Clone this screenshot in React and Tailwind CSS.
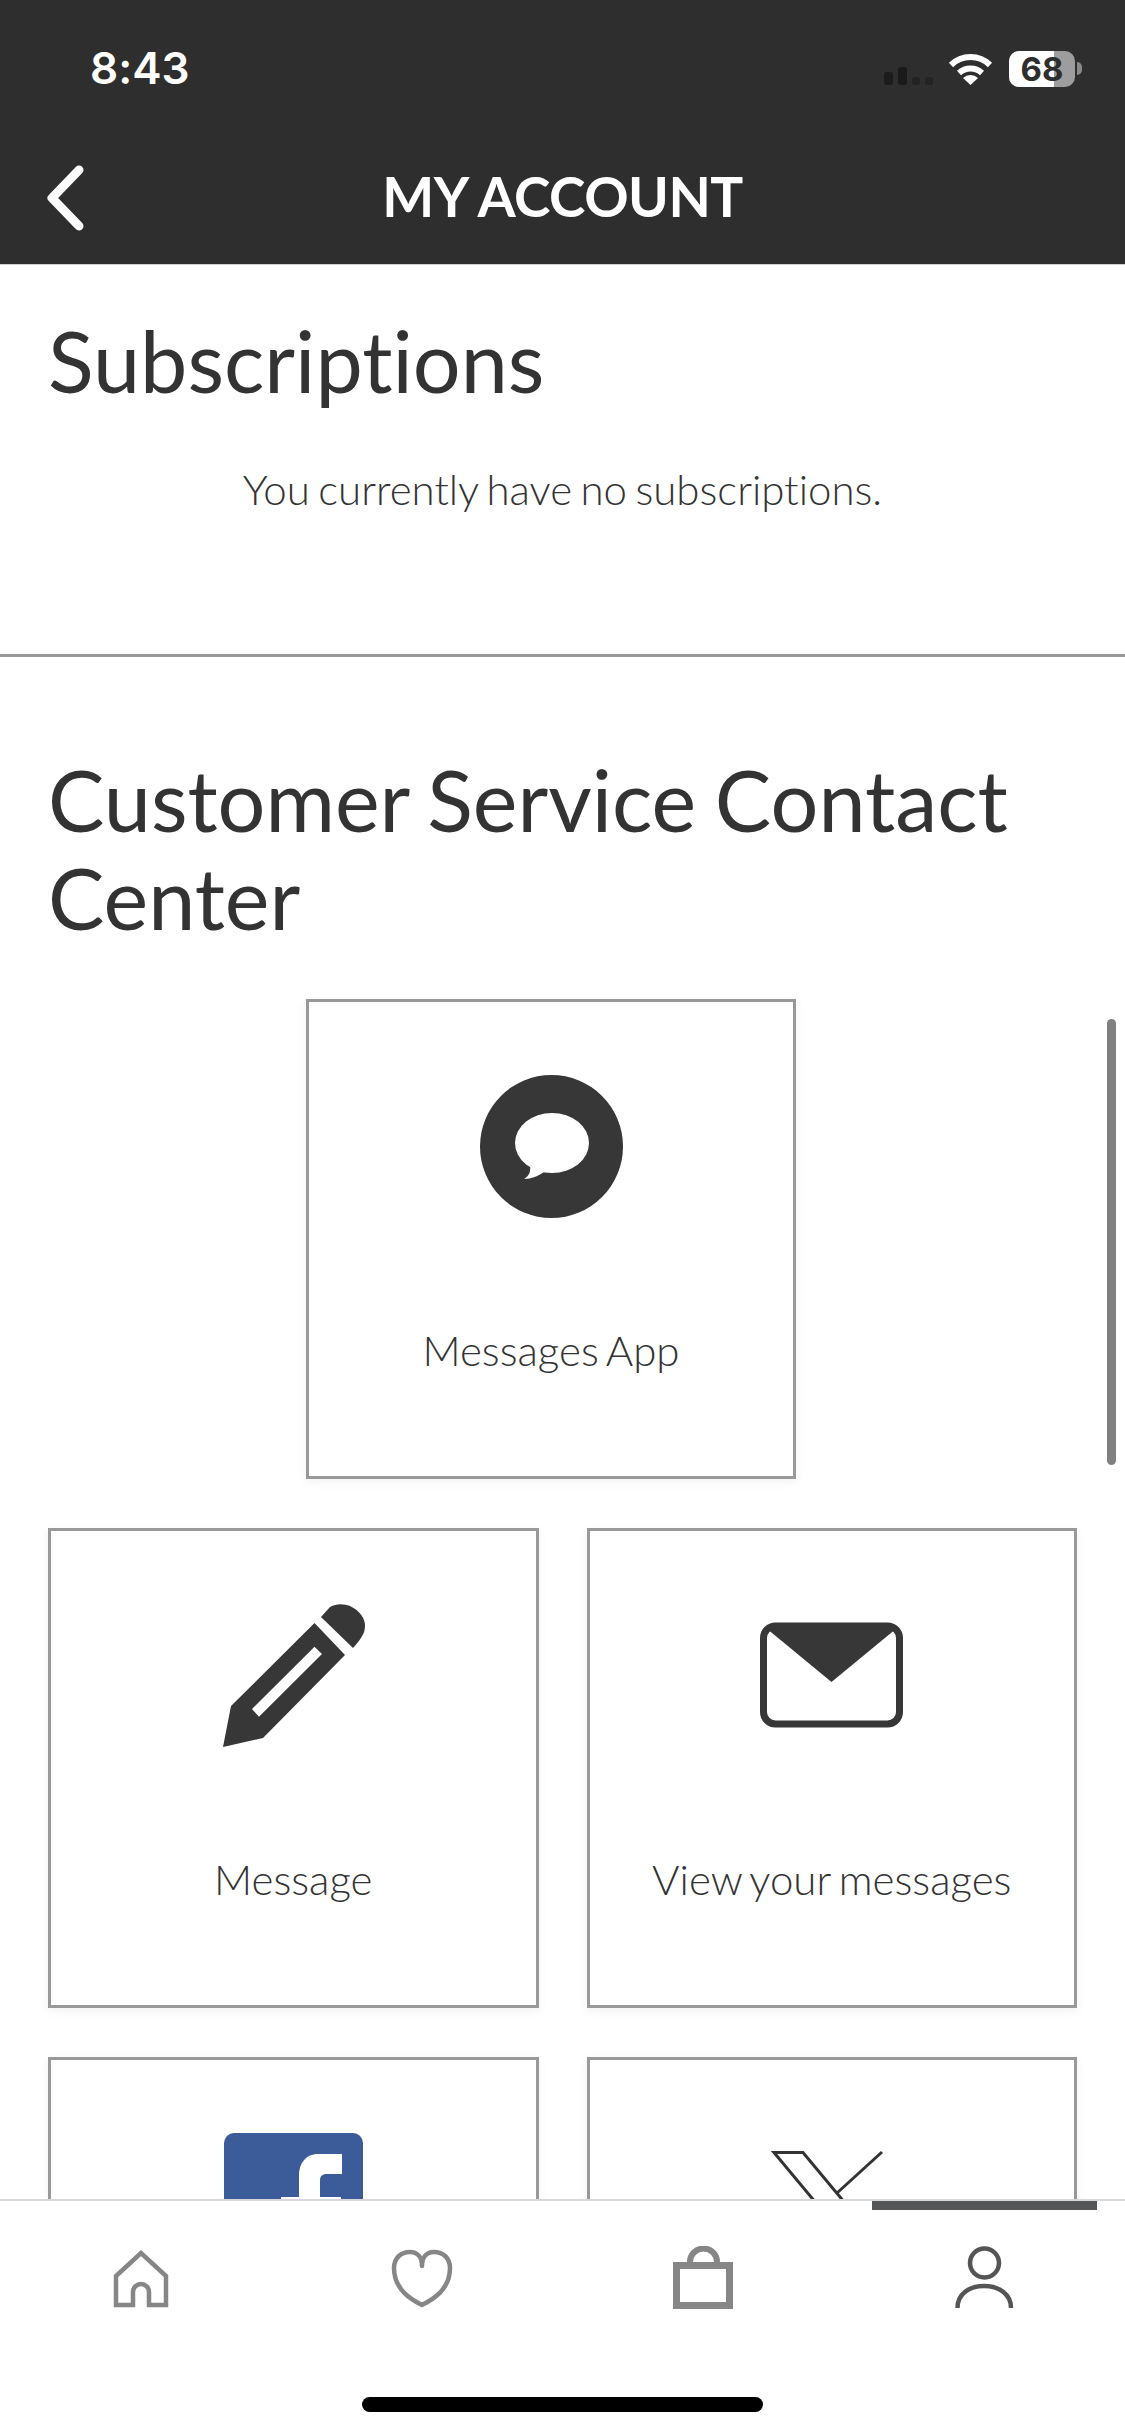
const lato = { fontFamily: '"Lato", "Liberation Sans", sans-serif', fontVariantLigatures: 'none' };

function Card({ label, children, className }) {
  return (
    <div className={`flex h-[480px] flex-col items-center border-[3px] border-[#999999] bg-white pt-[73px] shadow-[0_3px_10px_rgba(0,0,0,0.06)] ${className || ''}`}>
      <div className="h-[143px] w-[143px]">{children}</div>
      {label ? (
        <div className="mt-[104px] text-[42px] leading-[56px] font-light [word-spacing:-3px] text-[#333333]">{label}</div>
      ) : null}
    </div>
  );
}

function Bubble() {
  return (
    <svg viewBox="0 0 143 143" className="h-full w-full">
      <circle cx="71.5" cy="71.5" r="71.5" fill="#373737" />
      <ellipse cx="72" cy="68" rx="37" ry="30" fill="#ffffff" />
      <path d="M50 90 C51 97 49 101 44 104 C52 104 58 101 64 97 Z" fill="#ffffff" />
    </svg>
  );
}

function Pencil() {
  return (
    <svg viewBox="0 0 143 143" className="h-full w-full">
      <path
        fillRule="evenodd"
        d="M1 143 L41 134 L123 51 L92.5 19 L9 102 Z M92.5 42.7 L100 50 L37 112.7 L30 105 Z"
        fill="#373737"
      />
      <path d="M99 13 L108 3 C115 -1 122 0 128 2 C138 7 143 14 143 22 C143 29 139 35 131 44 Z" fill="#373737" />
    </svg>
  );
}

function Envelope() {
  return (
    <svg viewBox="0 0 143 143" className="h-full w-full">
      <rect x="3.5" y="22" width="136" height="98" rx="12" fill="#ffffff" stroke="#373737" strokeWidth="7" />
      <path d="M6 24 Q6 20 14 20 H129 Q137 20 137 24 L71.5 78 Z" fill="#373737" />
    </svg>
  );
}

function Facebook() {
  return (
    <svg viewBox="0 0 143 143" className="h-full w-full">
      <rect x="2" y="0" width="139" height="139" rx="10" fill="#3b5c98" />
      <path
        d="M120 21 H96 C84 21 77 30 77 43 V64 H59 V88 H77 V139 H98 V88 H119 V64 H98 V48 C98 43 100 41 105 41 H120 Z"
        fill="#ffffff"
      />
    </svg>
  );
}

function XLogo() {
  return (
    <svg viewBox="0 0 143 143" className="h-full w-full">
      <path d="M14 19.5 H43 L130 124 H101 Z" fill="none" stroke="#333333" strokeWidth="3" />
      <path d="M122 19 L77 60 M62 79 L18 124" fill="none" stroke="#333333" strokeWidth="3" />
    </svg>
  );
}

function HomeIcon() {
  return (
    <svg viewBox="0 0 64 64" className="h-16 w-16" fill="none" stroke="#868686" strokeWidth="4.5">
      <path d="M7 59 V30 L32 7 L57 30 V59 H40 V46 A8 8 0 0 0 24 46 V59 Z" />
    </svg>
  );
}

function HeartIcon() {
  return (
    <svg viewBox="0 0 64 64" className="h-16 w-16" fill="none" stroke="#868686" strokeWidth="4.5" strokeLinecap="round" strokeLinejoin="round">
      <path d="M32 59 C22 54 4 44 4 22 C4 12 11 6 20 6 C27 6 32 11 32 20 C32 11 37 6 44 6 C53 6 60 12 60 22 C60 44 42 54 32 59 Z" />
    </svg>
  );
}

function BagIcon() {
  return (
    <svg viewBox="0 0 64 64" className="h-16 w-16" fill="none" stroke="#868686">
      <rect x="5.5" y="19.5" width="53" height="40" strokeWidth="7" />
      <path d="M19 19 V16 A13.5 13.5 0 0 1 46 16 V19" strokeWidth="6" />
    </svg>
  );
}

function UserIcon() {
  return (
    <svg viewBox="0 0 64 64" className="h-16 w-16" fill="none" stroke="#555555" strokeWidth="4.5">
      <circle cx="32.5" cy="17" r="14.5" />
      <path d="M5.5 62 C5.5 48 17 40 32 40 C47 40 59 48 59 62" />
    </svg>
  );
}

function StatusBar() {
  return (
    <div className="flex h-[132px] items-start justify-between pt-[46px] pr-[43px] pl-[90px]">
      <div className="text-[44px] leading-[44px] font-semibold text-white" style={{ fontFamily: '"Inter", sans-serif' }}>
        8:43
      </div>
      <div className="flex items-end pt-[5px]">
        <div className="flex items-end gap-[5px]">
          <div className="h-[13px] w-[9px] rounded-[3px] bg-[#1c1c1c]" />
          <div className="h-[18px] w-[9px] rounded-[3px] bg-[#1a1a1a]" />
          <div className="h-[8px] w-[8px] rounded-[3px] bg-[#232323]" />
          <div className="h-[8px] w-[8px] rounded-[3px] bg-[#232323]" />
        </div>
        <svg viewBox="0 0 45 33" className="ml-[15px] h-[33px] w-[45px]" fill="none" stroke="#ffffff" strokeWidth="6">
          <path d="M3 13 A28 28 0 0 1 42 13" />
          <path d="M11 21 A17 17 0 0 1 34 21" />
          <path d="M22.5 33 L15 26 A11 11 0 0 1 30 26 Z" fill="#ffffff" stroke="none" />
        </svg>
        <div className="relative mb-[-2px] ml-[16px] h-[36px] w-[66px] rounded-[10px] bg-[#9d9d9d]">
          <div className="h-full w-[45px] rounded-l-[10px] bg-white" />
          <div
            className="absolute inset-0 flex items-center justify-center text-[33px] leading-none font-bold text-[#2e2e2e]"
            style={{ fontFamily: '"Inter", sans-serif' }}
          >
            68
          </div>
        </div>
        <div className="mb-[10px] ml-[2px] h-[13px] w-[5px] rounded-r-full bg-[#8a8a8a]" />
      </div>
    </div>
  );
}

export default function App() {
  return (
    <div className="flex h-[2436px] w-[1125px] flex-col overflow-hidden bg-white text-[#333333]" style={lato}>
      <header className="h-[265px] shrink-0 border-b border-[#cfcfcf] bg-[#2e2e2e]">
        <StatusBar />
        <div className="grid h-[132px] grid-cols-[1fr_auto_1fr] items-start">
          <svg viewBox="0 0 40 70" className="mt-[31px] ml-[44px] h-[70px] w-[40px]" fill="none" stroke="#ffffff" strokeWidth="9" strokeLinecap="round" strokeLinejoin="round">
            <path d="M35 7 L8 35 L35 63" />
          </svg>
          <h1 className="mt-[32px] text-[55px] leading-[64px] font-bold tracking-[-0.5px] text-white">MY ACCOUNT</h1>
          <div />
        </div>
      </header>

      <main className="relative min-h-0 flex-1 overflow-hidden">
        <div className="pt-[46px]">
          <h2 className="px-[48px] text-[84.5px] leading-[100px] font-normal">Subscriptions</h2>
          <p className="mt-[50px] text-center text-[42px] leading-[56px] font-light [word-spacing:-3px]">You currently have no subscriptions.</p>
          <div className="mt-[137px] h-[3px] bg-[#999999]" />
          <h2 className="mt-[94px] px-[48px] text-[84.5px] leading-[98px] font-normal [word-spacing:-3px]">Customer Service Contact Center</h2>
          <div className="mt-[52px] flex flex-col gap-[49px] px-[48px]">
            <div className="flex pl-[258px]">
              <Card label="Messages App" className="w-[490px]"><Bubble /></Card>
            </div>
            <div className="grid grid-cols-2 gap-x-[48px]">
              <Card label="Message"><Pencil /></Card>
              <Card label="View your messages"><Envelope /></Card>
            </div>
            <div className="grid grid-cols-2 gap-x-[48px]">
              <Card><Facebook /></Card>
              <Card><XLogo /></Card>
            </div>
          </div>
        </div>
        <div className="absolute top-[754px] right-[9px] h-[446px] w-[9px] rounded-full bg-[#808080]" />
      </main>

      <nav className="relative h-[237px] shrink-0 border-t-2 border-[#d8d8d8] bg-white">
        <div className="absolute top-0 left-[872px] h-[9px] w-[225px] bg-[#535556]" />
        <div className="grid grid-cols-4 pt-[45px]">
          <div className="flex justify-center"><HomeIcon /></div>
          <div className="flex justify-center"><HeartIcon /></div>
          <div className="flex justify-center"><BagIcon /></div>
          <div className="flex justify-center"><UserIcon /></div>
        </div>
        <div className="mx-auto mt-[87px] h-[15px] w-[401px] rounded-full bg-black" />
      </nav>
    </div>
  );
}
